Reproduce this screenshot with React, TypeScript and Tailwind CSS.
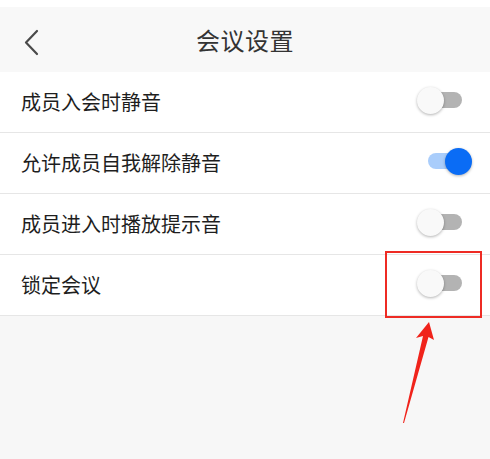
import { useState } from "react";

interface Setting {
  id: string;
  label: string;
  on: boolean;
}

const initial: Setting[] = [
  { id: "mute", label: "成员入会时静音", on: false },
  { id: "unmute", label: "允许成员自我解除静音", on: true },
  { id: "chime", label: "成员进入时播放提示音", on: false },
  { id: "lock", label: "锁定会议", on: false },
];

const Toggle = ({ on, onClick }: { on: boolean; onClick: () => void }) => (
  <button onClick={onClick} className="relative w-[56px] h-[28px] shrink-0">
    <span
      className={`absolute left-[11px] top-[6px] w-[34px] h-[16px] rounded-full ${
        on ? "bg-[#a9cdfb]" : "bg-[#b3b3b3]"
      }`}
    />
    <span
      className={`absolute top-[1px] w-[27px] h-[27px] rounded-full shadow-[0_1px_3px_rgba(0,0,0,0.3)] ${
        on ? "left-[28px] bg-[#0a6cf5]" : "left-0 bg-[#f9f9f9]"
      }`}
    />
  </button>
);

const App = () => {
  const [items, setItems] = useState<Setting[]>(initial);

  const flip = (id: string) =>
    setItems(items.map((s) => (s.id === id ? { ...s, on: !s.on } : s)));

  return (
    <div
      className="w-[490px] h-[459px] bg-[#f7f7f7] flex flex-col"
      style={{ fontFamily: '"Noto Sans CJK SC", "Noto Sans", sans-serif' }}
    >
      <div className="h-[7px] bg-white" />
      <div className="h-[65px] bg-[#f8f8f8] relative flex items-center justify-center">
        <svg
          className="absolute left-[23px] top-[22px]"
          width="18"
          height="27"
          viewBox="0 0 18 27"
          fill="none"
          stroke="#4a4a4a"
          strokeWidth="2.2"
          strokeLinecap="round"
          strokeLinejoin="round"
        >
          <path d="M14 2 L3 13.5 L14 25" />
        </svg>
        <h1 className="text-[24px] text-[#333] tracking-[0.5px] mt-[1px]">会议设置</h1>
      </div>

      <div className="bg-white">
        {items.map((s) => (
          <div
            key={s.id}
            className="h-[61px] flex items-center justify-between pl-[21px] pr-[17px] border-b border-[#e6e6e6]"
          >
            <span className="text-[20px] text-[#1e1e1e]">{s.label}</span>
            <div
              className={
                s.id === "lock"
                  ? "relative after:content-[''] after:absolute after:left-[-32px] after:right-[-9px] after:top-[-18px] after:bottom-[-16px] after:border-2 after:border-[#ee2b24] after:pointer-events-none"
                  : ""
              }
            >
              <Toggle on={s.on} onClick={() => flip(s.id)} />
            </div>
          </div>
        ))}
      </div>

      <div className="relative flex-1">
        <svg
          className="absolute left-[398px] top-[3px]"
          width="40"
          height="106"
          viewBox="398 319 40 106"
        >
          <polygon
            points="429,322 434,340 428.5,337 404,423 403,423 423,336 416,338"
            fill="#f0231b"
          />
        </svg>
      </div>
    </div>
  );
};

export default App;
